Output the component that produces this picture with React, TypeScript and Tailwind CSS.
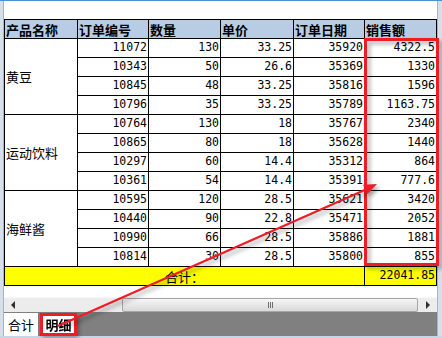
import React from 'react';

interface OrderRow {
  id: string;
  qty: string;
  price: string;
  date: string;
  amount: string;
}

interface ProductGroup {
  name: string;
  rows: OrderRow[];
}

const groups: ProductGroup[] = [
  {
    name: '黄豆',
    rows: [
      { id: '11072', qty: '130', price: '33.25', date: '35920', amount: '4322.5' },
      { id: '10343', qty: '50', price: '26.6', date: '35369', amount: '1330' },
      { id: '10845', qty: '48', price: '33.25', date: '35816', amount: '1596' },
      { id: '10796', qty: '35', price: '33.25', date: '35789', amount: '1163.75' },
    ],
  },
  {
    name: '运动饮料',
    rows: [
      { id: '10764', qty: '130', price: '18', date: '35767', amount: '2340' },
      { id: '10865', qty: '80', price: '18', date: '35628', amount: '1440' },
      { id: '10297', qty: '60', price: '14.4', date: '35312', amount: '864' },
      { id: '10361', qty: '54', price: '14.4', date: '35391', amount: '777.6' },
    ],
  },
  {
    name: '海鲜酱',
    rows: [
      { id: '10595', qty: '120', price: '28.5', date: '35621', amount: '3420' },
      { id: '10440', qty: '90', price: '22.8', date: '35471', amount: '2052' },
      { id: '10990', qty: '66', price: '28.5', date: '35886', amount: '1881' },
      { id: '10814', qty: '30', price: '28.5', date: '35800', amount: '855' },
    ],
  },
];

const headers = ['产品名称', '订单编号', '数量', '单价', '订单日期', '销售额'];

const cjk = "font-['Noto_Sans_CJK_SC',sans-serif]";
const mono = "font-['DejaVu_Sans_Mono','Noto_Sans_CJK_SC',monospace]";

function NumCell({ value }: { value: string }) {
  return (
    <div className={`bg-white flex items-center justify-end pr-px text-[11.5px] text-black leading-none ${mono}`}>
      {value}
    </div>
  );
}

export default function App() {
  return (
    <div className="relative w-[442px] h-[338px] flex flex-col bg-[#d3dde9] overflow-hidden">
      <div className="h-px bg-[#4a90d9]" />
      <div className="flex flex-1">
        {/* left frame */}
        <div className="w-[4px] bg-[#d7e0ea] border-r border-[#a9b4c2]" />

        <div className="w-[433px] flex flex-col bg-white">
          <div className="h-[18px]" />

          {/* report grid */}
          <div className="grid grid-cols-[72px_70px_71px_72px_70px_71px] auto-rows-[18px] gap-px bg-black p-px">
            {headers.map((h) => (
              <div
                key={h}
                className={`bg-[#b8cce4] flex items-center pl-px text-[13px] font-bold text-black leading-none ${cjk}`}
              >
                {h}
              </div>
            ))}

            {groups.map((g) => (
              <React.Fragment key={g.name}>
                <div className={`row-span-4 bg-white flex items-center pl-px text-[13px] text-black leading-none ${cjk}`}>
                  {g.name}
                </div>
                {g.rows.map((r) => (
                  <React.Fragment key={r.id}>
                    <NumCell value={r.id} />
                    <NumCell value={r.qty} />
                    <NumCell value={r.price} />
                    <NumCell value={r.date} />
                    <NumCell value={r.amount} />
                  </React.Fragment>
                ))}
              </React.Fragment>
            ))}

            {/* total row */}
            <div className={`col-span-5 bg-[#ffff00] flex items-center justify-center text-[13px] text-black leading-none ${cjk}`}>
              合计：
            </div>
            <div className={`bg-[#ffff00] flex items-center justify-end pr-px text-[11.5px] text-black leading-none ${mono}`}>
              22041.85
            </div>
          </div>

          <div className="h-[11px]" />

          {/* horizontal scrollbar */}
          <div className="h-[15px] flex items-center bg-[#ececec] border-t border-[#f8f8f8]">
            <div className="w-[118px] flex items-center pl-[7px]">
              <div className="w-0 h-0 border-y-[4px] border-y-transparent border-r-[4px] border-r-[#303030]" />
            </div>
            <div className="w-[296px] h-[14px] rounded-[2px] border border-[#a6a6a6] bg-gradient-to-b from-[#f6f6f6] to-[#d9d9d9] flex items-center justify-center gap-px">
              <div className="w-px h-[6px] bg-[#6e6e6e]" />
              <div className="w-px h-[6px] bg-[#6e6e6e]" />
              <div className="w-px h-[6px] bg-[#6e6e6e]" />
            </div>
            <div className="flex-1 flex items-center justify-center">
              <div className="w-0 h-0 border-y-[4px] border-y-transparent border-l-[4px] border-l-[#303030]" />
            </div>
          </div>

          {/* sheet tabs */}
          <div className="h-[24px] flex items-stretch gap-[2px] bg-[#808080] pt-px">
            <div className={`w-[34px] bg-white flex items-center justify-center text-[13px] text-black leading-none ${cjk}`}>
              合计
            </div>
            <div className={`w-[37px] bg-white border-[3px] border-[#ee1c24] flex items-center justify-center text-[13px] font-bold text-black leading-none drop-shadow-[2px_2px_2px_rgba(0,0,0,0.35)] ${cjk}`}>
              明细
            </div>
          </div>
        </div>

        {/* right frame */}
        <div className="flex-1 bg-[#d7e0ea] border-l border-[#a9b4c2]" />
      </div>
      <div className="h-[2px] bg-[#c6d6e8]" />

      {/* red highlight box */}
      <div className="absolute left-[364px] top-[38px] w-[75px] h-[228px] border-[3px] border-[#ee1c24] drop-shadow-[3px_3px_2px_rgba(0,0,0,0.35)]" />

      {/* red arrow */}
      <svg
        className="absolute left-0 top-0 drop-shadow-[3px_3px_2px_rgba(0,0,0,0.35)]"
        width="442"
        height="338"
        viewBox="0 0 442 338"
      >
        <line x1="58" y1="326" x2="367" y2="189" stroke="#ee1c24" strokeWidth="2.2" />
        <polygon points="377,184 363,184.7 367.5,194" fill="#ee1c24" />
      </svg>
    </div>
  );
}
